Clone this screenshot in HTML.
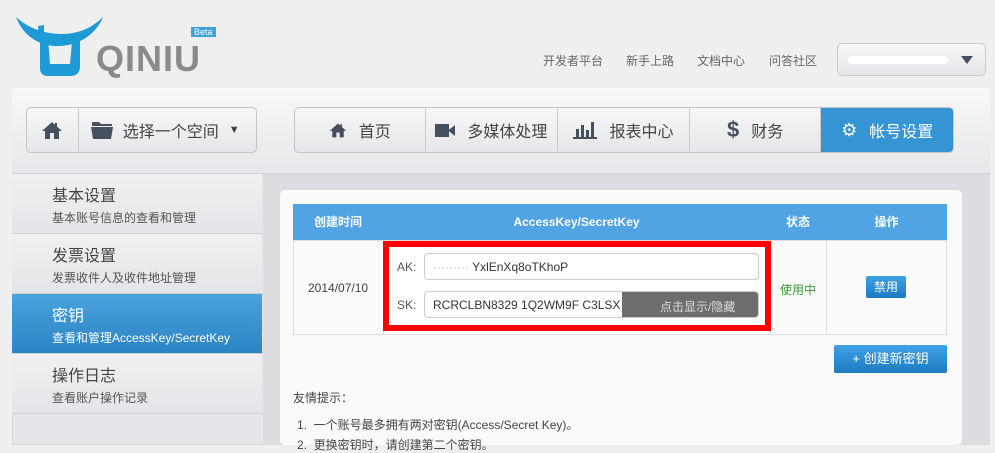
<!DOCTYPE html><html><head><meta charset="utf-8"><style>
*{box-sizing:border-box;margin:0;padding:0}
body{width:995px;height:445px;overflow:hidden;background:#efefef;font-family:"Liberation Sans","Noto Sans CJK SC",sans-serif;position:relative;color:#444}
.a{position:absolute}
.top a{position:absolute;top:52px;font-size:12px;color:#666}
.grp{position:absolute;top:107px;height:46px;border:1px solid #c3c5c9;border-radius:5px;background:linear-gradient(#f7f7f8,#e5e6e9);display:flex;overflow:hidden}
.seg{border-right:1px solid #c8c9cc;display:flex;align-items:center;justify-content:center;font-size:16px;color:#444;gap:12px}
.side div.it{position:absolute;left:12px;width:250px;height:60px;border-bottom:1px solid #cfd1d5;background:linear-gradient(#f0f0f2,#e4e5e8);padding:8px 0 0 40px}
.it b{display:block;font-weight:normal;font-size:16px;color:#444}
.it i{display:block;font-style:normal;font-size:12px;color:#555;margin-top:3px}
</style></head><body>
<svg class="a" style="left:0;top:0" width="110" height="80" viewBox="0 0 110 80"><path d="M16 17 C24 38 42 47 60 46 C80 45 96 34 103 17 C92 28 78 34 62 34 C44 34 28 28 16 17Z" fill="#1e9ad6"/><path d="M40 34 L40 68 Q40 76 48 76 L70 76 Q80 76 80 66 L80 40 L72 42 L70 64 L50 64 L48 38Z" fill="#1e9ad6"/><path d="M38 26 L44 25 L44 40 L39 40Z" fill="#1e9ad6"/></svg>
<div class="a" style="left:96px;top:42px;font-size:36px;font-weight:bold;color:#8a8a8a;letter-spacing:1px;line-height:34px">QINIU</div>
<div class="a" style="left:191px;top:27px;background:#3fa0dc;color:#fff;font-size:9px;padding:0 3px;line-height:10px">Beta</div>
<div class="top"><a style="left:543px">开发者平台</a><a style="left:626px">新手上路</a><a style="left:697px">文档中心</a><a style="left:769px">问答社区</a></div>
<div class="a" style="left:837px;top:43px;width:149px;height:33px;border:1px solid #c8c9cc;border-radius:5px;background:linear-gradient(#f7f7f8,#e5e6e9)"><div class="a" style="left:10px;top:12px;width:100px;height:8px;background:#fff;border-radius:4px"></div><div class="a" style="right:12px;top:12px;border:6px solid transparent;border-top:8px solid #45505e"></div></div>
<div class="a" style="left:12px;top:88px;width:978px;height:357px;background:#e5e6e9;border:1px solid #d6d7da;border-radius:5px 5px 0 0"></div>
<div class="a" style="left:12px;top:88px;width:978px;height:86px;background:linear-gradient(#f8f8f8,#e6e7ea);border-radius:5px 5px 0 0;border-bottom:1px solid #d0d2d6"></div>
<div class="grp" style="left:26px;width:231px"><div class="seg" style="width:52px"><svg width="22" height="18" viewBox="0 0 22 18"><path d="M11 1 L1 10 L4 10 L4 18 L9 18 L9 12 L13 12 L13 18 L18 18 L18 10 L21 10 L16 5.5 L16 2 L14 2 L14 3.7Z" fill="#45505e"/></svg></div><div class="seg" style="width:178px;border:0;justify-content:flex-start;padding-left:12px;gap:10px"><svg width="22" height="18" viewBox="0 0 22 18"><path d="M1 1 L8 1 L10 3 L21 3 L21 5 L1 5Z M0 6 L22 6 L20 18 L2 18Z" fill="#45505e"/></svg>选择一个空间 <span style="font-size:11px">▼</span></div></div>
<div class="grp" style="left:294px;width:660px">
<div class="seg" style="width:131px"><svg width="18" height="16" viewBox="0 0 22 18"><path d="M11 1 L1 10 L4 10 L4 18 L9 18 L9 12 L13 12 L13 18 L18 18 L18 10 L21 10 L16 5.5 L16 2 L14 2 L14 3.7Z" fill="#45505e"/></svg>首页</div>
<div class="seg" style="width:133px"><svg width="20" height="13" viewBox="0 0 20 13"><rect width="14" height="13" fill="#45505e"/><path d="M13 6.5 L20 1 L20 12Z" fill="#45505e"/></svg>多媒体处理</div>
<div class="seg" style="width:132px"><svg width="24" height="18" viewBox="0 0 24 18"><rect x="3" y="8" width="3" height="8" fill="#45505e"/><rect x="8" y="4" width="3" height="12" fill="#45505e"/><rect x="13" y="9" width="3" height="7" fill="#45505e"/><rect x="18" y="1" width="3" height="15" fill="#45505e"/><rect x="0" y="16" width="24" height="2" fill="#45505e"/></svg>报表中心</div>
<div class="seg" style="width:132px"><span style="color:#45505e;font-weight:bold;font-size:22px">$</span>财务</div>
<div class="seg" style="width:132px;background:#3494d4;color:#fff;border:0"><span style="font-size:18px">⚙</span>帐号设置</div></div>
<div class="side">
<div class="it" style="top:174px"><b>基本设置</b><i>基本账号信息的查看和管理</i></div>
<div class="it" style="top:234px"><b>发票设置</b><i>发票收件人及收件地址管理</i></div>
<div class="it" style="top:294px;background:linear-gradient(#4aa3de,#2a83c4)"><b style="color:#fff">密钥</b><i style="color:#fff">查看和管理AccessKey/SecretKey</i></div>
<div class="it" style="top:354px"><b>操作日志</b><i>查看账户操作记录</i></div>
</div>
<div class="a" style="left:263px;top:174px;width:727px;height:271px;background:#dcdde0"></div>
<div class="a" style="left:280px;top:190px;width:682px;height:255px;background:#fafafa;border-radius:5px"></div>
<div class="a" style="left:293px;top:204px;width:654px;height:36px;background:#50a4e4;color:#fff;font-size:12px;font-weight:bold;line-height:36px">
<span class="a" style="left:0;width:90px;text-align:center">创建时间</span><span class="a" style="left:90px;width:387px;text-align:center">AccessKey/SecretKey</span><span class="a" style="left:477px;width:56px;text-align:center">状态</span><span class="a" style="left:533px;width:121px;text-align:center">操作</span></div>
<div class="a" style="left:293px;top:240px;width:654px;height:95px;border:1px solid #ddd;background:#fafafa"></div>
<div class="a" style="left:383px;top:240px;width:1px;height:95px;background:#ddd"></div>
<div class="a" style="left:770px;top:240px;width:1px;height:95px;background:#ddd"></div>
<div class="a" style="left:826px;top:240px;width:1px;height:95px;background:#ddd"></div>
<div class="a" style="left:308px;top:281px;font-size:12px">2014/07/10</div>
<div class="a" style="left:383px;top:241px;width:388px;height:90px;border:6px solid #f00;background:#fff"></div>
<div class="a" style="left:397px;top:260px;font-size:12px;color:#555">AK:</div>
<div class="a" style="left:397px;top:298px;font-size:12px;color:#555">SK:</div>
<div class="a" style="left:424px;top:253px;width:335px;height:27px;border:1px solid #ccc;border-radius:4px;font-size:12px;padding:6px 0 0 8px;color:#333;overflow:hidden;white-space:nowrap"><span style="color:#ccc">·········</span> YxlEnXq8oTKhoP</div>
<div class="a" style="left:424px;top:291px;width:335px;height:27px;border:1px solid #ccc;border-radius:4px;font-size:12px;padding:6px 0 0 8px;color:#333;overflow:hidden;white-space:nowrap">RCRCLBN8329 1Q2WM9F C3LSX<div class="a" style="left:197px;top:0;width:137px;height:25px;background:#6d6d6d;border-radius:0 4px 4px 0;color:#ddd;padding:6px 0 0 38px">点击显示/隐藏</div></div>
<div class="a" style="left:780px;top:281px;font-size:12px;color:#3a9a3a">使用中</div>
<div class="a" style="left:866px;top:276px;width:40px;height:22px;background:linear-gradient(#3ea2e6,#1f7ac0);border-radius:2px;color:#fff;font-size:12px;text-align:center;line-height:22px">禁用</div>
<div class="a" style="left:834px;top:345px;width:113px;height:28px;background:linear-gradient(#3ea2e6,#1f7ac0);border-radius:2px;color:#fff;font-size:13px;text-align:center;line-height:28px">+ 创建新密钥</div>
<div class="a" style="left:293px;top:389px;font-size:12px;color:#444">友情提示：</div>
<div class="a" style="left:297px;top:416px;font-size:12px;color:#444">1.&nbsp; 一个账号最多拥有两对密钥(Access/Secret Key)。</div>
<div class="a" style="left:297px;top:436px;font-size:12px;color:#444">2.&nbsp; 更换密钥时，请创建第二个密钥。</div>
</body></html>
